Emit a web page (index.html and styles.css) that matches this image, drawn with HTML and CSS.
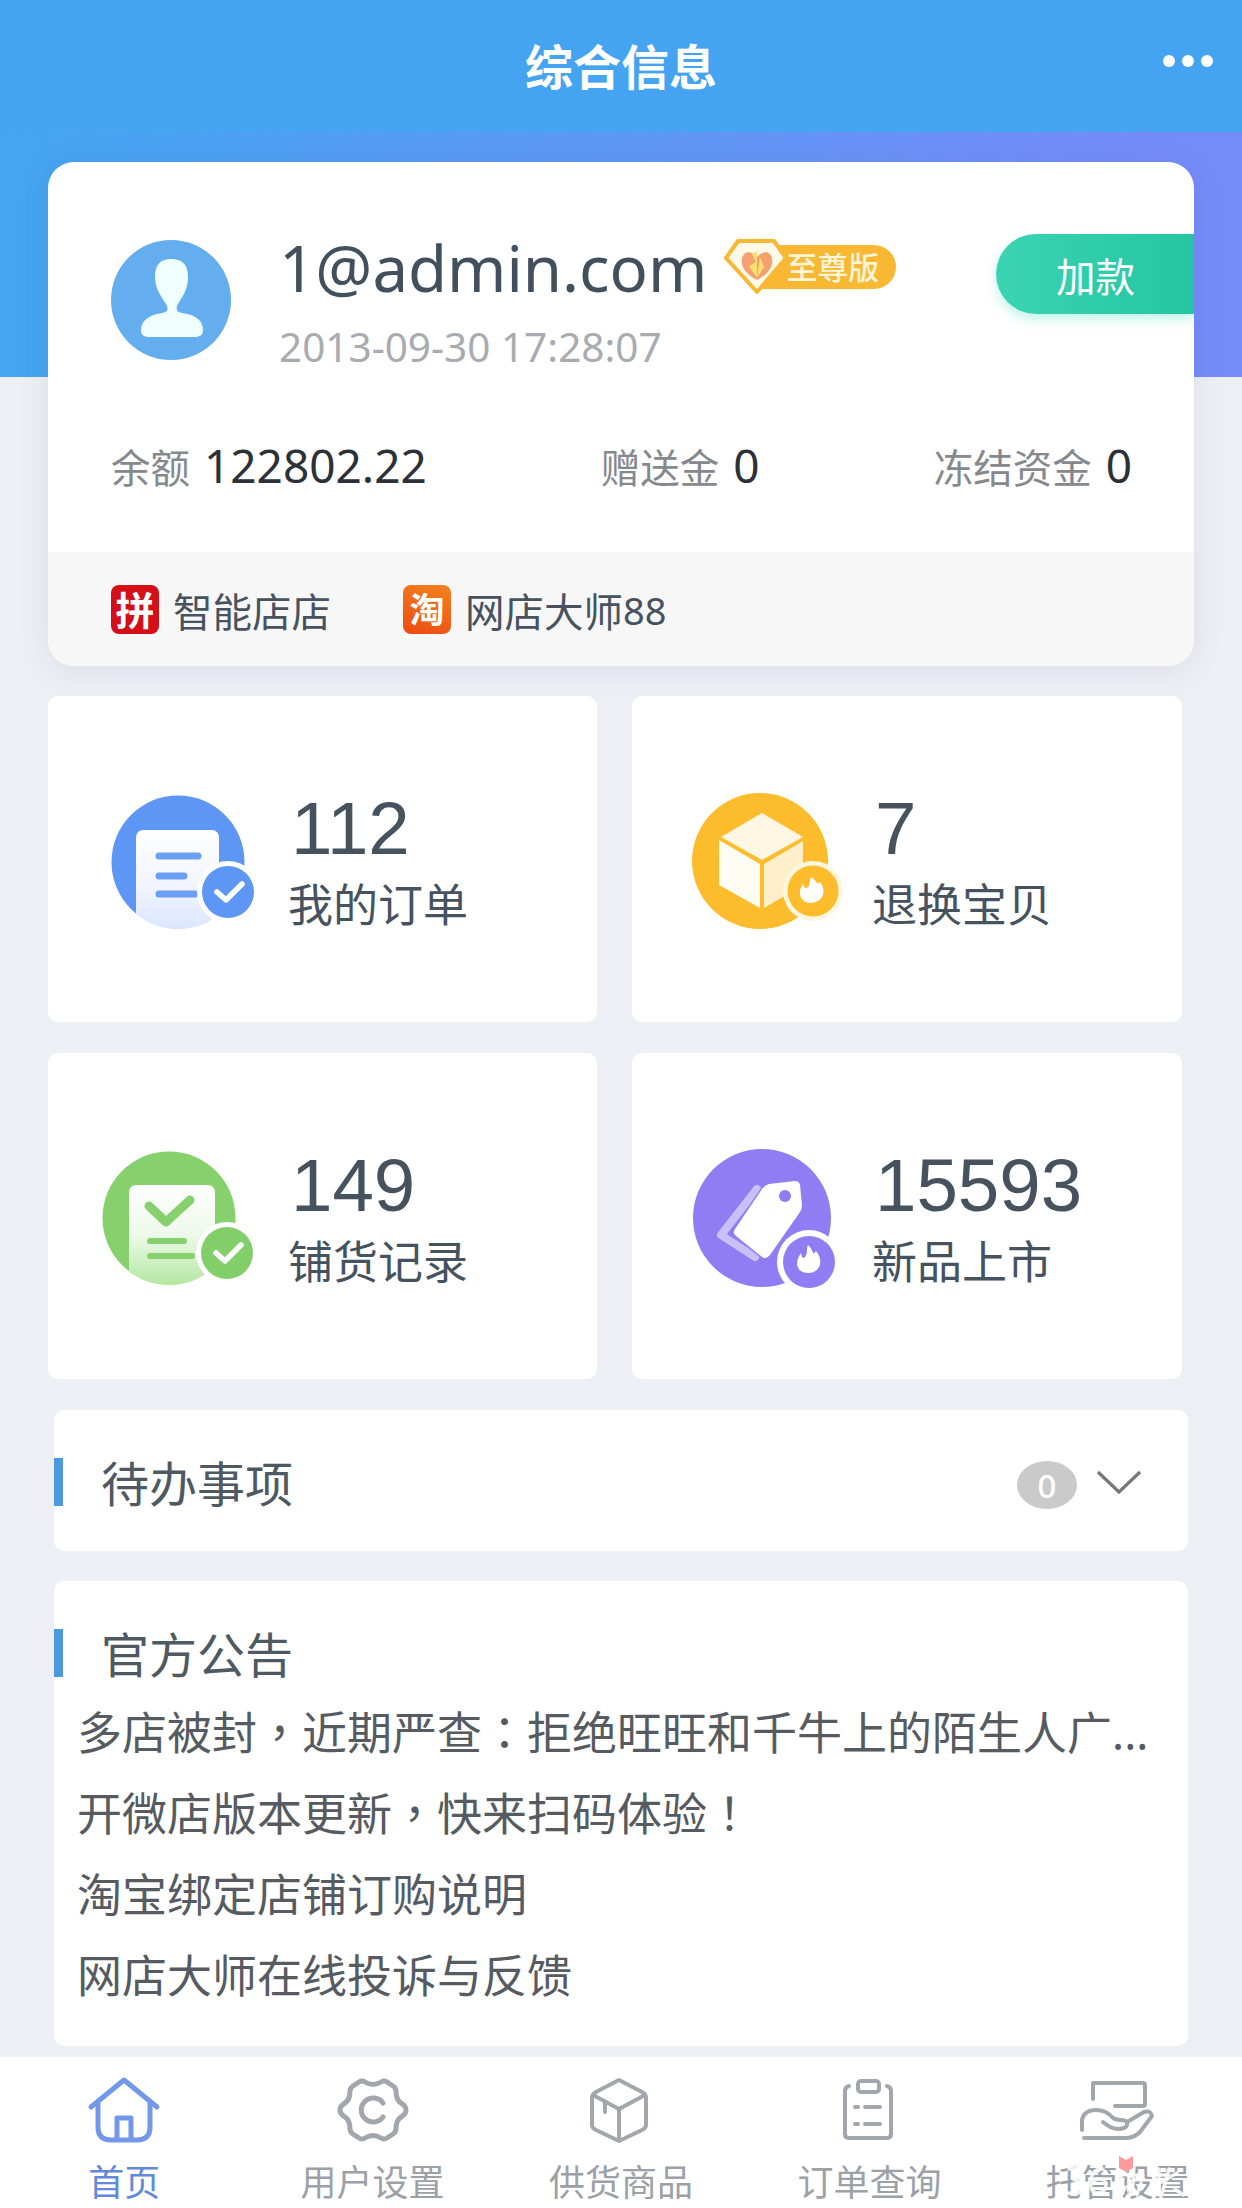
FILE: index.html
```html
<!DOCTYPE html>
<html lang="zh-CN">
<head>
<meta charset="utf-8">
<title>综合信息</title>
<link rel="stylesheet" href="styles.css">
</head>
<body>
<header class="topbar">
  <h1>综合信息</h1>
  <div class="more"><i></i><i></i><i></i></div>
</header>

<section class="summary">
  <div class="card">
    <div class="profile">
      <svg class="avatar" viewBox="0 0 120 120">
        <circle cx="60" cy="60" r="60" fill="#64adef"/>
        <path fill="#f0ffff" d="M60 19c11 0 17 5 17 18 0 12-5 19-10 27-3 5-1 8 4 9 15 2 21 8 21 17 0 5-3 7-8 7H38c-5 0-8-2-8-7 0-9 7-15 21-17 6-1 7-4 4-9-5-8-11-15-11-27 0-13 6-18 16-18z"/>
      </svg>
      <div class="who">
        <div class="name-row">
          <span class="name">1@admin.com</span>
          <span class="level">
            <svg class="gem" viewBox="0 0 66 56">
              <path d="M15 2h36l12 17-29 34L3 19z" fill="#fff9e8" stroke="#f8b833" stroke-width="4" stroke-linejoin="round"/>
              <path d="M21 15c-5 8-2 18 13 26 15-8 18-18 13-26-4-3-8-2-13 3-5-5-9-6-13-3z" fill="#f4a070"/>
              <path d="M34 12v27l-8-12 7-4-4-8zM37 18l4 10-7 11z" fill="#ffe070"/>
            </svg>
            <span class="level-text">至尊版</span>
          </span>
        </div>
        <div class="date">2013-09-30 17:28:07</div>
      </div>
      <div class="topup">加款</div>
    </div>
    <div class="funds">
      <div>余额<b>122802.22</b></div>
      <div>赠送金<b>0</b></div>
      <div>冻结资金<b>0</b></div>
    </div>
    <div class="shops">
      <div class="shop"><span class="logo pin">拼</span>智能店店</div>
      <div class="shop"><span class="logo tao">淘</span>网店大师<span class="latin">88</span></div>
    </div>
  </div>
</section>

<section class="tiles">
  <div class="tile">
    <svg viewBox="0 0 156 144">
      <defs><linearGradient id="paperBlue" x2="0" y2="1"><stop offset="0" stop-color="#fff"/><stop offset=".5" stop-color="#f2f5ff"/><stop offset="1" stop-color="#d6e2ff"/></linearGradient>
      <clipPath id="discBlue"><circle cx="73" cy="72" r="67"/></clipPath></defs>
      <circle cx="73" cy="72" r="66.500" fill="#5d96f4"/>
      <rect x="31" y="40" width="83" height="110" rx="7" fill="url(#paperBlue)" clip-path="url(#discBlue)"/>
      <path d="M54 66h39M54 86h25M54 104h36" stroke="#6b9ff3" stroke-width="7" stroke-linecap="round"/>
      <circle cx="123" cy="102" r="31" fill="#fff"/><circle cx="123" cy="102" r="26" fill="#5d96f4"/>
      <path d="M112 102l9 8 16-16" fill="none" stroke="#fff" stroke-width="5.500" stroke-linecap="round" stroke-linejoin="round"/>
    </svg>
    <div class="stat"><strong>112</strong><span>我的订单</span></div>
  </div>
  <div class="tile">
    <svg viewBox="0 0 156 144">
      <circle cx="71" cy="71" r="68" fill="#fdbc2b"/>
      <path d="M73 23l41 24-41 23-41-23z" fill="#fff6e3"/>
      <path d="M30 50l41 24v44L30 95z" fill="#fffcf3"/>
      <path d="M75 74l39-23v44l-39 23z" fill="#fff0cb"/>
      <circle cx="124" cy="101" r="30" fill="#fff6df"/><circle cx="124" cy="101" r="25.500" fill="#fdbc2b"/>
      <path d="M122 87c7 4 5 9 9 5 6 7 5 20-9 21-13-1-13-12-8-19 1 4 3 5 5 3 3-3 1-6 3-10z" fill="#fff"/>
    </svg>
    <div class="stat"><strong>7</strong><span>退换宝贝</span></div>
  </div>
  <div class="tile">
    <svg viewBox="0 0 156 144">
      <defs><linearGradient id="paperGreen" x2="0" y2="1"><stop offset="0" stop-color="#fff"/><stop offset=".45" stop-color="#edf9ea"/><stop offset="1" stop-color="#a5e38f"/></linearGradient>
      <clipPath id="discGreen"><circle cx="64" cy="71" r="67"/></clipPath></defs>
      <circle cx="64" cy="71" r="66.500" fill="#86d06d"/>
      <rect x="24" y="38" width="86" height="112" rx="7" fill="url(#paperGreen)" clip-path="url(#discGreen)"/>
      <path d="M44 59l17 16 24-22" fill="none" stroke="#86d06d" stroke-width="9" stroke-linecap="round" stroke-linejoin="round"/>
      <path d="M45 94h34M45 109h42" stroke="#86d06d" stroke-width="6" stroke-linecap="round"/>
      <circle cx="122" cy="106" r="31" fill="#fff"/><circle cx="122" cy="106" r="26" fill="#82cf6a"/>
      <path d="M111 106l9 8 16-16" fill="none" stroke="#fff" stroke-width="5.500" stroke-linecap="round" stroke-linejoin="round"/>
    </svg>
    <div class="stat"><strong>149</strong><span>铺货记录</span></div>
  </div>
  <div class="tile">
    <svg viewBox="0 0 156 144">
      <defs><clipPath id="discPurple"><circle cx="73" cy="71" r="69"/></clipPath></defs>
      <circle cx="73" cy="71" r="69" fill="#907df3"/>
      <path d="M68 42L32 88l34 22" fill="none" stroke="#c9bffa" stroke-width="8" stroke-linecap="round" stroke-linejoin="round"/>
      <path d="M80 37l26-3q4 0 5 4l2 20q0 4-2 7l-30 43q-4 5-8 2L47 89q-4-3-1-7l27-40q3-4 7-5z" fill="#fff" stroke="#907df3" stroke-width="3" paint-order="stroke"/>
      <circle cx="96" cy="49" r="6" fill="#907df3"/>
      <circle cx="120" cy="115" r="32" fill="#fff" clip-path="url(#discPurple)"/><circle cx="120" cy="115" r="26" fill="#907df3"/>
      <path d="M119 98c6 5 4 12 8 6 7 8 6 21-7 22-14 0-14-12-8-20 1 5 2 6 4 4 3-4 1-7 3-12z" fill="#fff"/>
    </svg>
    <div class="stat"><strong>15593</strong><span>新品上市</span></div>
  </div>
</section>

<section class="panel todo">
  <h2>待办事项</h2>
  <span class="count">0</span>
  <svg class="chevron" viewBox="0 0 46 28"><path d="M2 3l21 20L44 3" fill="none" stroke="#75777b" stroke-width="3.200"/></svg>
</section>

<section class="panel news">
  <h2>官方公告</h2>
  <ul>
    <li>多店被封<i lang="zh-TW">，</i>近期严查<i lang="zh-TW">：</i>拒绝旺旺和千牛上的陌生人广<em>...</em></li>
    <li>开微店版本更新<i lang="zh-TW">，</i>快来扫码体验<i lang="zh-TW">！</i></li>
    <li>淘宝绑定店铺订购说明</li>
    <li>网店大师在线投诉与反馈</li>
  </ul>
</section>

<nav class="tabs">
  <a class="tab active">
    <svg viewBox="0 0 80 68"><path d="M7 31L40 4l33 27M14 27v24q0 13 13 13h26q13 0 13-13V27M33 63V42h14v21"/></svg>
    <span>首页</span>
  </a>
  <a class="tab">
    <svg viewBox="0 0 80 68"><path d="M26 6q3-2 6 0 8 5 16 0 3-2 6 0l6 4q3 2 3 5 0 9 5 12 5 3 5 7t-5 7q-5 3-5 12 0 3-3 5l-6 4q-3 2-6 0-8-5-16 0-3 2-6 0l-6-4q-3-2-3-5 0-9-5-12-5-3-5-7t5-7q5-3 5-12 0-3 3-5z"/><path d="M50 27a12 12 0 1 0 0 14"/></svg>
    <span>用户设置</span>
  </a>
  <a class="tab">
    <svg class="thin" viewBox="0 0 80 68"><path d="M38 4l23 12q4 2 4 6v27q0 3-4 5L38 65 15 54q-4-2-4-5V22q0-4 4-6zM12 19l26 14 26-14M38 33v31M24 26v10"/></svg>
    <span>供货商品</span>
  </a>
  <a class="tab">
    <svg class="thin" viewBox="0 0 80 68"><path d="M20 10q-4 1-4 5v43q0 4 4 4h38q4 0 4-4V15q0-4-4-5"/><rect x="29" y="5" width="21" height="11" rx="3"/><path d="M26 31h3M36 31h15M26 48h3M36 48h15"/></svg>
    <span>订单查询</span>
  </a>
  <a class="tab">
    <svg class="hand" viewBox="0 0 80 68"><path d="M15 23V7h50q2 0 2 2v19q0 2-2 2H37"/><path d="M4 54V44q2-10 14-10 10 0 16 7 3 3 9 3 7 0 6 5-1 4-10 4-7-1-14-7M49 46l17-10q7-2 8 4L62 56q-6 6-14 6H6"/></svg>
    <span>托管设置</span>
    <svg class="mark" viewBox="0 0 130 50">
      <g fill="none" stroke="#fff" stroke-width="3.500" stroke-opacity=".85">
        <path d="M6 14q12-4 12 5 0 6-7 6 9 0 8 8-2 8-14 5M40 14q-10-1-12 10-2 14 7 14 8-1 8-8 0-6-7-6-5 0-8 5"/>
        <path d="M54 20l6 4M52 30l6 4M56 42l7-10M66 20h14M70 20q2 14-6 22M78 28l-4 12M88 20h16M96 14v26M90 32l24-14M106 14l-8 28M112 34l8 6"/>
      </g>
      <path d="M56 1l7 4 7-4v12l-7 4-7-4z" fill="#ff9b9b"/>
    </svg>
  </a>
</nav>
</body>
</html>
```
FILE: styles.css
```css
* { box-sizing: border-box; }
body {
  margin: 0;
  width: 1242px;
  height: 2208px;
  overflow: hidden;
  display: flex;
  flex-direction: column;
  background: #edeff4;
  color: #46535f;
  font-family: "Noto Sans CJK SC", sans-serif;
}
h1, h2, ul { margin: 0; padding: 0; font-weight: 400; }
i, em { font-style: normal; }

.topbar {
  flex: none;
  height: 132px;
  display: grid;
  grid-template-columns: 1fr auto 1fr;
  align-items: center;
  background: #44a4f1;
}
.topbar h1 {
  grid-column: 2;
  font-size: 48px;
  line-height: 60px;
  padding-bottom: 4px;
  font-weight: 700;
  color: #fff;
}
.more {
  display: flex;
  justify-content: flex-end;
  gap: 7px;
  padding: 0 29px 10px 0;
}
.more i { width: 12px; height: 12px; border-radius: 50%; background: #fff; }

.summary {
  flex: none;
  padding: 30px 48px;
  background: linear-gradient(90deg, #43a5f1, #748bf9 92%) top / 100% 245px no-repeat;
}
.card {
  height: 504px;
  display: flex;
  flex-direction: column;
  border-radius: 26px;
  overflow: hidden;
  background: #fff;
  box-shadow: 0 4px 30px rgba(90, 80, 150, .11);
}
.profile {
  display: flex;
  align-items: flex-start;
  height: 248px;
  padding: 72px 0 0 63px;
}
.avatar { width: 120px; height: 120px; margin-top: 6px; }
.who {
  margin-left: 48px;
  font-family: "Noto Sans", "Noto Sans CJK SC", sans-serif;
}
.name-row { display: flex; height: 74px; }
.name { font-size: 63.500px; line-height: 70px; margin-top: -1px; color: #42505e; }
.date { margin-top: 14px; font-size: 40.500px; line-height: 50px; color: #a8abb0; white-space: nowrap; }
.level { display: flex; height: 56px; margin: 5px 0 0 16px; }
.gem { width: 66px; height: 56px; z-index: 1; }
.level-text {
  width: 141px;
  height: 44px;
  margin: 6px 0 0 -34px;
  padding-left: 31px;
  border-radius: 8px 22px 22px 8px;
  background: #f8b833;
  color: #fff5d8;
  font: 500 31px/41px "Noto Sans CJK SC", sans-serif;
}
.topup {
  width: 198px;
  height: 80px;
  margin-left: auto;
  padding-left: 60px;
  border-radius: 40px 0 0 40px;
  background: linear-gradient(90deg, #3ad4b3, #26c5a2);
  box-shadow: 0 6px 12px rgba(60, 220, 190, .3);
  color: #fff;
  font-size: 39.500px;
  line-height: 81px;
}
.funds {
  display: flex;
  justify-content: space-between;
  padding: 14px 62px 0 63px;
  height: 142px;
  color: #85898e;
  font-size: 39.500px;
  line-height: 84px;
}
.funds b {
  margin-left: 14px;
  font: 400 46px/60px "Noto Sans", sans-serif;
  color: #2c3138;
}
.shops {
  flex: 1;
  display: flex;
  gap: 72px;
  align-items: center;
  padding: 0 63px;
  background: #f7f7f7;
  font-size: 39.500px;
}
.shop { display: flex; align-items: center; line-height: 60px; padding-top: 2px; }
.latin { font-family: "Noto Sans", sans-serif; font-size: 38px; }
.logo {
  width: 48px;
  height: 49px;
  margin: -2px 14px 0 0;
  border-radius: 8px;
  text-align: center;
  color: #fff;
  font-weight: 700;
  font-size: 39px;
  line-height: 46px;
}
.pin { background: #d40f17; }
.tao { background: linear-gradient(20deg, #ee4a12, #f28320); font-size: 35px; }

.tiles {
  flex: none;
  display: grid;
  grid-template-columns: 549px 550px;
  grid-template-rows: 326px 326px;
  gap: 31px 35px;
  padding-left: 48px;
}
.tile {
  display: flex;
  align-items: flex-start;
  padding: 94px 0 0 57px;
  background: #fff;
  border-radius: 10px;
}
.tile svg { width: 156px; height: 144px; overflow: visible; }
.stat {
  display: flex;
  flex-direction: column;
  margin: -3px 0 0 27px;
  font-size: 45px;
}
.stat strong {
  padding-left: 3px;
  font: 400 74.500px/84px "Liberation Sans", Arial, sans-serif;
  font-kerning: normal;
}
.stat span { line-height: 62px; margin-top: 1px; }

.panel {
  flex: none;
  width: 1134px;
  margin: 31px 0 0 54px;
  background: #fff;
  border-radius: 10px;
}
.panel h2 {
  height: 48px;
  padding-left: 38px;
  border-left: 9px solid #4a98de;
  font-size: 48px;
  line-height: 46px;
  color: #4e5962;
}
.todo { height: 141px; display: flex; align-items: center; }
.todo h2 { margin-top: 2px; }
.count {
  width: 60px;
  height: 48px;
  margin: 9px 19px 0 auto;
  border-radius: 50%;
  background: #cacaca;
  color: #fff;
  text-align: center;
  font: 500 33px/50px "Noto Sans", sans-serif;
}
.chevron { width: 46px; height: 28px; margin: 4px 46px 0 0; }
.news { height: 465px; margin-top: 30px; padding-top: 48px; }
.news ul { list-style: none; padding: 13px 0 0 23px; }
.news li { height: 81px; line-height: 81px; font-size: 45px; color: #555b61; white-space: nowrap; }
.news li i { font-family: "Noto Sans CJK TC", sans-serif; }
.news li em { font-family: "Noto Sans", sans-serif; }

.tabs {
  flex: none;
  height: 151px;
  margin-top: 11px;
  display: grid;
  grid-template-columns: repeat(5, 1fr);
  background: #fff;
}
.tab {
  position: relative;
  display: flex;
  flex-direction: column;
  align-items: center;
  padding-top: 19px;
  color: #9ba1a7;
  font-size: 36px;
}
.tab svg {
  width: 80px;
  height: 68px;
  fill: none;
  stroke: #a1a7ad;
  stroke-width: 5;
  stroke-linejoin: round;
  stroke-linecap: round;
}
.tab svg.thin, .tab svg.hand { stroke-width: 4; }
.tab span { line-height: 50px; margin-top: 11px; }
.tab.active { color: #6389dc; }
.tab.active svg { stroke: #7397ea; }
.tab svg.mark {
  position: absolute;
  left: 69px;
  top: 98px;
  width: 130px;
  height: 50px;
  stroke: none;
}
```
